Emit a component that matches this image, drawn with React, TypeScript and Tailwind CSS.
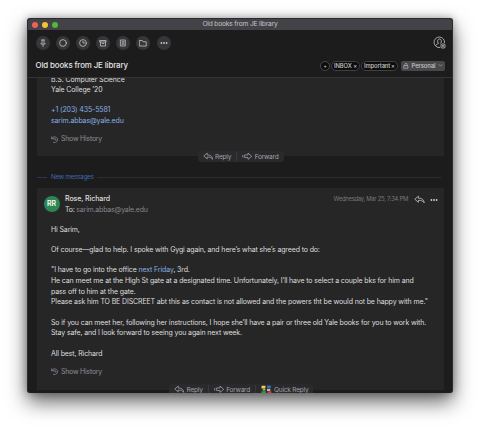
import React from "react";
import type { ReactNode } from "react";

function Icon({ children, className = "" }: { children: ReactNode; className?: string }) {
  return (
    <svg viewBox="0 0 16 16" className={`shrink-0 ${className}`} fill="none" stroke="currentColor" strokeWidth="1.6" strokeLinejoin="round" strokeLinecap="round">
      {children}
    </svg>
  );
}

const tools: ReactNode[] = [
  <path d="M5.5 2h5M6 2v5L3.5 10h9L10 7V2M8 10v5" />,
  <circle cx="8" cy="8" r="6.800" />,
  <><circle cx="8" cy="8" r="6.800" /><path d="M8 4.5V8h3" /></>,
  <><path d="M2 3h12v3H2zM3 6v8h10V6M6.5 9h3" /></>,
  <><path d="M3.5 2h9v12h-9zM6 5.5h4M6 8h4M6 10.5h4" /></>,
  <path d="M1.5 3h5l1.5 2.5h6.500V14h-13z" />,
  <g fill="currentColor" stroke="none"><circle cx="2.8" cy="8" r="1.8" /><circle cx="8" cy="8" r="1.8" /><circle cx="13.200" cy="8" r="1.8" /></g>,
];

function ReplyIcon({ className = "" }: { className?: string }) {
  return (
    <svg viewBox="0 0 20 16" className={`shrink-0 ${className}`} fill="none" stroke="currentColor" strokeWidth="1.5" strokeLinejoin="round">
      <path d="M8 2 1.500 7.500 8 13v-3.500c5 0 8 .5 10.500 4.500C18 8.500 15 5.500 8 5.500z" />
    </svg>
  );
}

function ForwardIcon({ className = "" }: { className?: string }) {
  return (
    <svg viewBox="0 0 20 16" className={`shrink-0 ${className}`} fill="none" stroke="currentColor" strokeWidth="1.5" strokeLinejoin="round">
      <path d="M11.500 2 18.500 8l-7 6v-3.500H5v-5h6.500zM1.500 5.500v5" />
    </svg>
  );
}

function ShowHistory() {
  return (
    <div className="flex h-[11px] items-center gap-[2.500px] text-[6.9px] tracking-[-0.2px] text-[#8d8d93]">
      <Icon className="size-[7.500px]">
        <path d="M1.500 1.500v4.500H6M2 5.500A6.300 6.300 0 1 1 5 13.700M8.500 5v3.500h2.500" />
      </Icon>
      <span>Show History</span>
    </div>
  );
}

function Actions({ quick = false }: { quick?: boolean }) {
  return (
    <div className="flex h-[11px] items-center rounded-[3px] bg-[#2a2a2c] px-[5px] text-[6.5px] leading-[8px] tracking-[-0.2px] text-[#a2a2a8]">
      <ReplyIcon className="mr-[2px] h-[8.500px] w-[10.500px]" />
      <span>Reply</span>
      <span className="mx-[5px] h-[9px] w-px bg-[#38383b]" />
      <ForwardIcon className="mr-[2px] h-[8.500px] w-[10.500px]" />
      <span>Forward</span>
      {quick && (
        <>
          <span className="mx-[5px] h-[9px] w-px bg-[#38383b]" />
          <svg viewBox="0 0 20 16" className="mr-[2px] h-[9px] w-[11px]">
            <path d="M1 1h7v5H1z" fill="#f0cf52" />
            <path d="M11 1h7v4h-7z" fill="#3978cf" />
            <path d="M3 7h5v3H3z" fill="#9cc04b" />
            <path d="M11 6.500h6v4h-6z" fill="#b8b5c7" />
            <path d="M1 11h8v4H1z" fill="#2c9c4b" />
            <path d="M12 11h7v4h-7z" fill="#d43b3b" />
          </svg>
          <span>Quick Reply</span>
        </>
      )}
    </div>
  );
}

function Line({ children }: { children: ReactNode }) {
  return <p className="h-[10.700px] leading-[10.700px] whitespace-nowrap">{children}</p>;
}

export default function App() {
  return (
    <div className="h-[429px] w-[480px] overflow-hidden bg-white pt-[18px] pl-[27px] font-['Inter','Liberation_Sans',sans-serif]">
      <div className="flex h-[375px] w-[426px] flex-col overflow-hidden rounded-[3px] border border-b-0 border-[#2b2b2d] bg-[#1c1c1d] text-[#dededf] shadow-[0_9px_20px_rgba(0,0,0,0.6),0_0_8px_rgba(0,0,0,0.3)]">
        <header className="flex h-[11px] shrink-0 items-center bg-[#434247]">
          <div className="flex w-[64px] gap-[4px] pl-[3.500px]">
            <span className="size-[6px] rounded-full bg-[#ee6158]" />
            <span className="size-[6px] rounded-full bg-[#f3c330]" />
            <span className="size-[6px] rounded-full bg-[#50b83c]" />
          </div>
          <h1 className="flex-1 pr-[64px] text-center text-[6.700px] leading-[11px] tracking-[-0.2px] text-[#c4c4c7]">Old books from JE library</h1>
        </header>

        <div className="flex h-[25px] shrink-0 items-center justify-between pr-[6px] pl-[7.500px]">
          <div className="flex gap-[6.200px]">
            {tools.map((tool, i) => (
              <button key={i} className="flex size-[14px] items-center justify-center rounded-full bg-[#363638] text-[#c5c5c8]">
                <Icon className="size-[8px]">{tool}</Icon>
              </button>
            ))}
          </div>
          <svg viewBox="0 0 26 26" className="size-[13px] text-[#bdbdc0]" fill="none" stroke="currentColor" strokeWidth="1.700">
            <path d="M14 23A10.500 10.500 0 1 1 23 14M5 20c1-3 3-4 6-5-3-3-2-9 2-9s5 6 2 9" />
            <rect x="16" y="16" width="8" height="8" rx="2" />
            <path d="M20 18v4M18 20h4" />
          </svg>
        </div>

        <div className="flex h-[23px] shrink-0 items-center justify-between border-b border-[#343436] pr-[7px] pb-[1px] pl-[7.500px]">
          <h2 className="text-[7.900px] font-medium tracking-[-0.12px] text-[#e5e5e6]">Old books from JE library</h2>
          <div className="flex items-center text-[5.900px] leading-[8px] font-medium tracking-[-0.1px] text-[#c9c9cb]">
            <span className="mr-[1px] flex size-[10px] items-center justify-center rounded-full border border-[#48484b] bg-[#0d0d0e] text-[5px]">+</span>
            <span className="mr-[1px] flex h-[10px] w-[29px] items-center justify-center gap-[1.500px] rounded-full border border-[#404043] bg-[#0d0d0e] text-[5.800px]">INBOX <span>×</span></span>
            <span className="mr-[3px] flex h-[10px] w-[37px] items-center justify-center gap-[1px] rounded-full border border-[#404043] bg-[#0d0d0e] text-[5.800px]">Important <span>×</span></span>
            <span className="flex h-[10px] w-[44px] items-center justify-center gap-[2.500px] rounded-[2px] bg-[#48484a]">
              <Icon className="size-[6px]"><path d="M3 7h10v7H3zM5 7V4a3 3 0 0 1 6 0v3" /></Icon>
              Personal
              <Icon className="size-[5px]"><path d="m3 5 5 5 5-5" /></Icon>
            </span>
          </div>
        </div>

        <main className="min-h-0 flex-1 overflow-hidden pr-[8px] pl-[9px] text-[7px] tracking-[-0.13px]">
          <section className="flow-root h-[78px] bg-[#262627] pl-[14px]">
            <div className="-mt-[3.500px]">
              <Line>B.S. Computer Science</Line>
              <Line>Yale College ’20</Line>
            </div>
            <div className="mt-[9px] text-[#86afe4]">
              <Line>+1 (203) 435-5581</Line>
              <Line>sarim.abbas@yale.edu</Line>
            </div>
            <div className="mt-[7.500px]"><ShowHistory /></div>
          </section>
          <div className="-mt-[5px] flex justify-center"><Actions /></div>

          <div className="mt-[10px] flex h-[11px] items-center gap-[4px] text-[6.500px] tracking-[-0.37px] text-[#3f68ae]">
            <span className="h-px w-[10px] bg-[#29374f]" />
            <span>New messages</span>
            <span className="mr-[3px] h-px flex-1 bg-[#2e2e30]" />
          </div>

          <section className="mt-[5px] h-[202px] bg-[#262627] pt-[6px] pl-[6.500px]">
            <div className="flex items-start">
              <div className="mt-[1.500px] flex size-[16px] items-center justify-center rounded-full bg-[#2e8654] text-[7px] leading-[16px] font-semibold text-white">RR</div>
              <div className="ml-[5.500px] flex-1">
                <p className="h-[10.500px] text-[7.100px] leading-[10.500px] font-medium tracking-[-0.12px]">Rose, Richard</p>
                <p className="h-[10.500px] text-[7px] leading-[10.500px] tracking-[-0.2px]">To: <span className="text-[#85858b]">sarim.abbas@yale.edu</span></p>
              </div>
              <div className="flex h-[11px] items-center pr-[6px] text-[5.900px] tracking-[-0.28px] text-[#78787c]">
                <span>Wednesday, Mar 25, 7:34 PM</span>
                <ReplyIcon className="ml-[6px] h-[9px] w-[11px] text-[#c2c2c5]" />
                <Icon className="ml-[5px] size-[8px] text-[#d0d0d3]">{tools[6]}</Icon>
              </div>
            </div>
            <div className="mt-[10px] ml-[7.500px] flex flex-col gap-[9.500px]">
              <Line>Hi Sarim,</Line>
              <Line>Of course—glad to help. I spoke with Gygi again, and here’s what she’s agreed to do:</Line>
              <div>
                <Line>"I have to go into the office <span className="text-[#86afe4]">next Friday</span>, 3rd.</Line>
                <Line>He can meet me at the High St gate at a designated time. Unfortunately, I’ll have to select a couple bks for him and</Line>
                <Line>pass off to him at the gate.</Line>
                <Line>Please ask him TO BE DISCREET abt this as contact is not allowed and the powers tht be would not be happy with me."</Line>
              </div>
              <div>
                <Line>So if you can meet her, following her instructions, I hope she’ll have a pair or three old Yale books for you to work with.</Line>
                <Line>Stay safe, and I look forward to seeing you again next week.</Line>
              </div>
              <Line>All best, Richard</Line>
            </div>
            <div className="mt-[7px] ml-[7.500px]"><ShowHistory /></div>
          </section>
          <div className="-mt-[6px] flex justify-center pl-[1.500px]"><Actions quick /></div>
        </main>
      </div>
    </div>
  );
}
